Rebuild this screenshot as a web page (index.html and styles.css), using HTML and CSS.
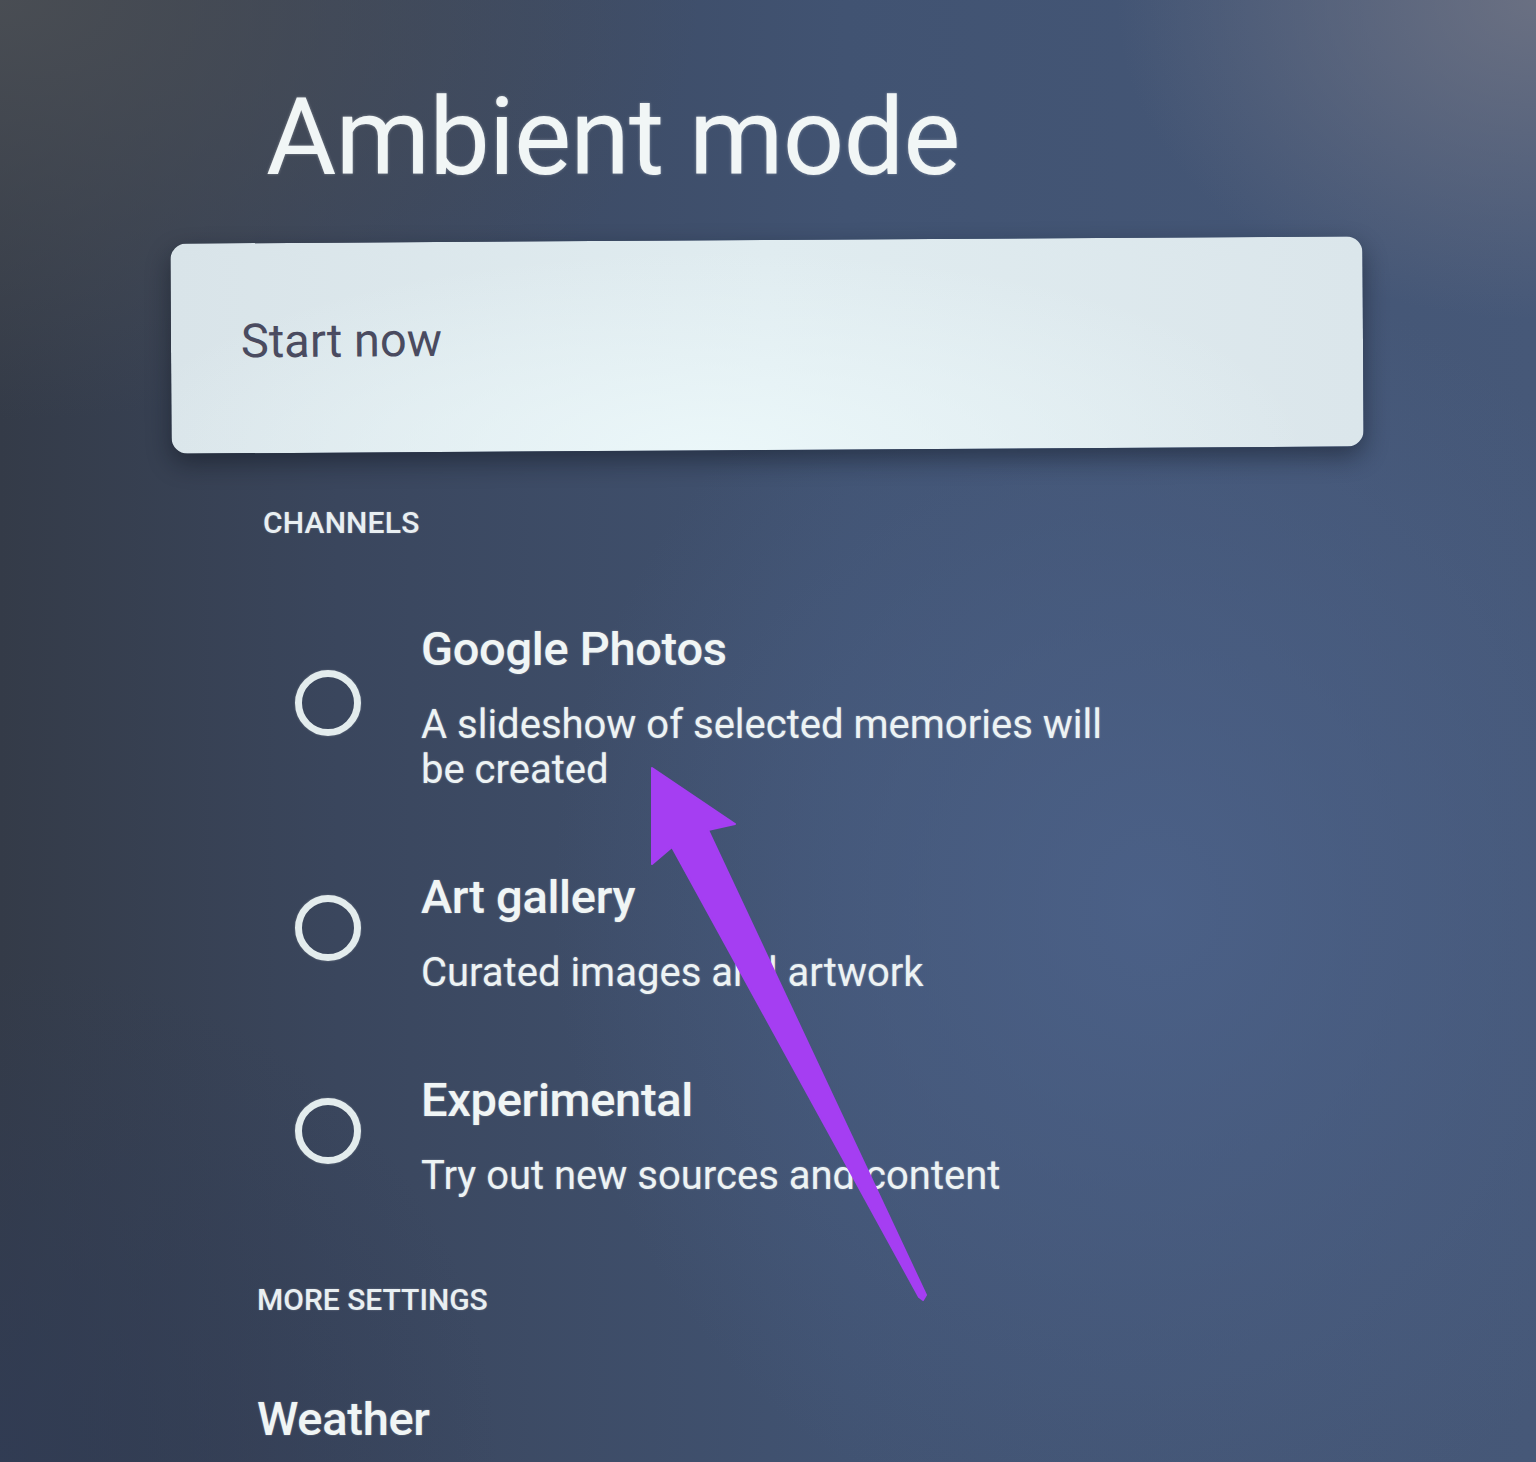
FILE: index.html
```html
<!DOCTYPE html>
<html lang="en">
<head>
<meta charset="utf-8">
<title>Ambient mode</title>
<link rel="stylesheet" href="styles.css">
</head>
<body>
<div class="screen">
  <h1 class="title">Ambient mode</h1>
  <div class="card"><span class="card-label">Start now</span></div>
  <div class="section-label">CHANNELS</div>
  <ul class="options">
    <li class="option">
      <span class="radio"></span>
      <div class="option-text">
        <div class="option-title">Google Photos</div>
        <div class="option-desc">A slideshow of selected memories will<br>be created</div>
      </div>
    </li>
    <li class="option">
      <span class="radio"></span>
      <div class="option-text">
        <div class="option-title">Art gallery</div>
        <div class="option-desc">Curated images and artwork</div>
      </div>
    </li>
    <li class="option">
      <span class="radio"></span>
      <div class="option-text">
        <div class="option-title">Experimental</div>
        <div class="option-desc">Try out new sources and content</div>
      </div>
    </li>
  </ul>
  <div class="section-label more">MORE SETTINGS</div>
  <div class="setting-title">Weather</div>
</div>
<svg class="arrow" width="1536" height="1462" viewBox="0 0 1536 1462" aria-hidden="true">
  <polygon points="652,768 735,824 708,830 926,1295 923,1300 919,1297 672,847 652,864" fill="#a53ef2" stroke="#a53ef2" stroke-width="2" stroke-linejoin="round"/>
</svg>
</body>
</html>
```

FILE: styles.css
```css
html, body {
  margin: 0;
  padding: 0;
}

body {
  width: 1536px;
  height: 1462px;
  overflow: hidden;
  position: relative;
  font-family: Roboto, "Liberation Sans", sans-serif;
  color: #eef4f5;
  background:
    radial-gradient(ellipse 420px 320px at 100% 0%, rgba(112, 116, 132, 0.85) 0%, rgba(112, 116, 132, 0) 100%),
    radial-gradient(ellipse 700px 420px at 0% 0%, rgba(74, 78, 84, 0.95) 0%, rgba(74, 78, 84, 0) 100%),
    radial-gradient(ellipse 600px 650px at 75% 62%, rgba(76, 98, 138, 0.85) 0%, rgba(76, 98, 138, 0) 100%),
    radial-gradient(ellipse 500px 500px at 0% 100%, rgba(48, 60, 86, 0.8) 0%, rgba(48, 60, 86, 0) 100%),
    linear-gradient(90deg, #343b48 0%, #3a465d 22%, #415372 55%, #465878 100%);
}

.screen {
  display: flex;
  flex-direction: column;
  align-items: flex-start;
  padding: 82px 0 0 171px;
}

.title {
  margin: 0 0 0 95px;
  font-size: 108px;
  line-height: 110px;
  font-weight: 400;
  letter-spacing: -1px;
  color: #f1f6f6;
  text-shadow: 0 0 3px rgba(255, 255, 255, 0.35);
}

.card {
  margin-top: 48px;
  width: 1192px;
  height: 210px;
  box-sizing: border-box;
  padding: 0 0 16px 70px;
  display: flex;
  align-items: center;
  border-radius: 16px;
  background:
    radial-gradient(ellipse 600px 200px at 45% 100%, rgba(236, 248, 250, 0.9) 0%, rgba(236, 248, 250, 0) 100%),
    linear-gradient(90deg, #d9e4e9 0%, #e0ecf0 50%, #dbe6eb 100%);
  box-shadow: 0 10px 24px rgba(10, 15, 25, 0.45);
  transform: rotate(-0.35deg);
}

.card-label {
  font-size: 47px;
  font-weight: 400;
  color: #4a4b60;
}

.section-label {
  margin: 55px 0 0 92px;
  font-size: 30px;
  line-height: 36px;
  font-weight: 500;
  letter-spacing: 0.2px;
  color: #e9eff2;
  text-shadow: 0 0 2px rgba(255, 255, 255, 0.3);
}

.section-label.more {
  margin: 84px 0 0 86px;
  letter-spacing: 0;
}

.options {
  list-style: none;
  margin: 80px 0 0 0;
  padding: 0;
  display: flex;
  flex-direction: column;
  gap: 77px;
}

.option {
  display: flex;
  align-items: center;
}

.radio {
  margin: 0 0 8px 124px;
  width: 66px;
  height: 66px;
  box-sizing: border-box;
  border: 7px solid #e3eced;
  border-radius: 50%;
  flex: none;
  box-shadow: 0 0 2px rgba(255, 255, 255, 0.3);
}

.option-text {
  margin-left: 60px;
  display: flex;
  flex-direction: column;
}

.option-title {
  font-size: 47px;
  line-height: 56px;
  font-weight: 500;
  letter-spacing: -0.3px;
  color: #f0f5f5;
  text-shadow: 0 0 2px rgba(255, 255, 255, 0.35);
}

.option-desc {
  margin-top: 25px;
  font-size: 40px;
  line-height: 45px;
  font-weight: 400;
  color: #edf3f4;
  text-shadow: 0 0 2px rgba(255, 255, 255, 0.4);
}

.setting-title {
  margin: 73px 0 0 86px;
  font-size: 47px;
  line-height: 56px;
  font-weight: 500;
  letter-spacing: -0.3px;
  color: #f0f5f5;
  text-shadow: 0 0 2px rgba(255, 255, 255, 0.35);
}

.arrow {
  position: absolute;
  left: 0;
  top: 0;
  pointer-events: none;
}
```
